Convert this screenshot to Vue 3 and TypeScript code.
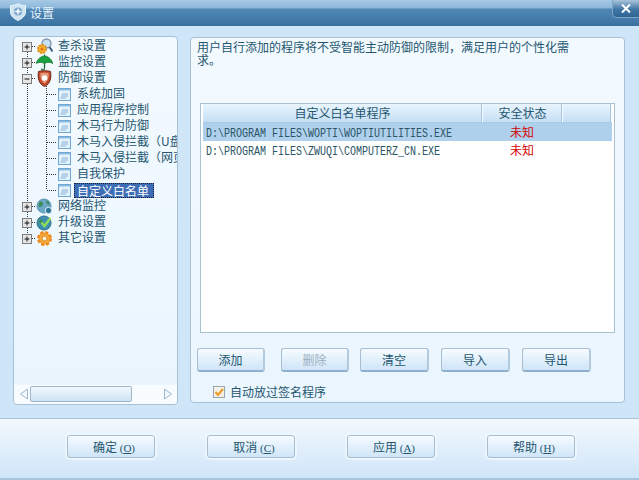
<script setup lang="ts">
type TreeRow = {
  label: string
  icon: string
  child?: boolean
  box?: '+' | '-'
  lastChild?: boolean
  lastRoot?: boolean
  selected?: boolean
}

const treeRows: TreeRow[] = [
  { label: '查杀设置', icon: 'scan', box: '+' },
  { label: '监控设置', icon: 'umbrella', box: '+' },
  { label: '防御设置', icon: 'shield', box: '-' },
  { label: '系统加固', icon: 'doc', child: true },
  { label: '应用程序控制', icon: 'doc', child: true },
  { label: '木马行为防御', icon: 'doc', child: true },
  { label: '木马入侵拦截（U盘传播）', icon: 'doc', child: true },
  { label: '木马入侵拦截（网页传播）', icon: 'doc', child: true },
  { label: '自我保护', icon: 'doc', child: true },
  { label: '自定义白名单', icon: 'doc', child: true, lastChild: true, selected: true },
  { label: '网络监控', icon: 'globe', box: '+' },
  { label: '升级设置', icon: 'update', box: '+' },
  { label: '其它设置', icon: 'gear', box: '+', lastRoot: true },
]

const whitelist = [
  { path: 'D:\\PROGRAM FILES\\WOPTI\\WOPTIUTILITIES.EXE', state: '未知', active: true },
  { path: 'D:\\PROGRAM FILES\\ZWUQI\\COMPUTERZ_CN.EXE', state: '未知', active: false },
]

const actions = [
  { label: '添加', disabled: false },
  { label: '删除', disabled: true },
  { label: '清空', disabled: false },
  { label: '导入', disabled: false },
  { label: '导出', disabled: false },
]

const footerButtons = [
  { label: '确定', key: 'O' },
  { label: '取消', key: 'C' },
  { label: '应用', key: 'A' },
  { label: '帮助', key: 'H' },
]
</script>

<template>
  <div class="window">
    <header class="titlebar">
      <svg class="title-icon" width="16" height="18" viewBox="0 0 16 18">
        <path d="M8 0.5 C10 2 13 2.5 15.5 2.5 V9 C15.5 13 12 15.5 8 17.5 C4 15.5 0.5 13 0.5 9 V2.5 C3 2.5 6 2 8 0.5 Z" fill="#cfe3f3" stroke="#eaf4fb" />
        <circle cx="8" cy="8.5" r="4" fill="#7aa6cb" />
        <path d="M8 4.5 L9 7.5 L12 8.5 L9 9.5 L8 12.5 L7 9.5 L4 8.5 L7 7.5 Z" fill="#f4fafe" />
      </svg>
      <span class="title-text">设置</span>
      <button class="close-btn">
        <svg width="10" height="9" viewBox="0 0 10 9">
          <path d="M1 0.5 L9 8.5 M9 0.5 L1 8.5" stroke="#fff" stroke-width="2" />
        </svg>
      </button>
    </header>

    <main class="content">
      <aside class="tree-panel">
        <div class="tree">
          <div v-for="row in treeRows" :key="row.label" class="tree-row">
            <svg class="guides" :width="row.child ? 43 : 22" height="16">
              <line x1="13.5" :y1="row.label === '查杀设置' ? 8 : 0" x2="13.5" :y2="row.lastRoot ? 8 : 16" class="dots" />
              <template v-if="row.child">
                <line x1="32.5" y1="0" x2="32.5" :y2="row.lastChild ? 8 : 16" class="dots" />
                <line x1="33" y1="8.5" x2="43" y2="8.5" class="dots" />
              </template>
              <template v-else>
                <line x1="18" y1="8.5" x2="22" y2="8.5" class="dots" />
                <rect x="8.5" y="4.5" width="9" height="9" fill="#e6e6e6" stroke="#7d7d7d" />
                <line x1="10.5" y1="9" x2="15.5" y2="9" stroke="#111" />
                <line v-if="row.box === '+'" x1="13" y1="6.5" x2="13" y2="11.5" stroke="#111" />
              </template>
            </svg>

            <svg class="node-icon" :class="{ small: row.child }" :width="row.child ? 15 : 17" :height="row.child ? 15 : 17" :viewBox="row.child ? '0 0 15 15' : '0 0 17 17'">
              <template v-if="row.icon === 'doc'">
                <rect x="1.5" y="1.5" width="12" height="12" fill="#e3f1fb" stroke="#6fa6d2" />
                <rect x="2" y="2" width="11" height="1.5" fill="#8dbde2" />
                <path d="M5 7 H11 M4 9 H11 M3.5 11 H9" stroke="#86b3d8" />
              </template>
              <template v-else-if="row.icon === 'scan'">
                <circle cx="10.5" cy="5.5" r="4.5" fill="#c9e0f2" stroke="#8398b0" stroke-width="1.4" />
                <path d="M13.5 9 L16.5 13.5" stroke="#3d5a80" stroke-width="2" />
                <circle cx="6" cy="11" r="4.2" fill="#f4b12d" stroke="#e08a14" stroke-width="1.6" stroke-dasharray="2.2 1" />
                <circle cx="6" cy="11" r="1.5" fill="#e4721a" />
              </template>
              <template v-else-if="row.icon === 'umbrella'">
                <path d="M0 9.5 C2 4 5.5 2 8.5 2 C11.5 2 15 4 17 9.5 C14 8 11 8 8.5 9.5 C6 8 3 8 0 9.5 Z" fill="#1ba03e" stroke="#0f6f2a" stroke-width="0.6" />
                <path d="M8.5 0.5 V2 M8.5 9 V14.5 C8.5 16.5 5.5 16.5 5.5 14.5" fill="none" stroke="#1f6b3a" stroke-width="1.3" />
              </template>
              <template v-else-if="row.icon === 'shield'">
                <path d="M2.5 1.5 C5 0.5 12 0.5 14.5 1.5 C15.5 7 14.5 14 8.5 16.5 C2.5 14 1.5 7 2.5 1.5 Z" fill="#c24a2b" stroke="#6f2a18" />
                <path d="M4.5 3 C6 2.5 11 2.5 12.5 3 C13 7 12 11 8.5 13.5 C5 11 4 7 4.5 3 Z" fill="#e59a7a" />
                <circle cx="8.5" cy="8" r="2.8" fill="#fff" />
              </template>
              <template v-else-if="row.icon === 'globe'">
                <circle cx="8" cy="8" r="7" fill="#6ba7c7" stroke="#5c95b4" />
                <path d="M4 3.5 C7 3 8 6 6 8 C4 10 2.5 9 2.5 6.5 Z M10 2.5 C13 3 14 6 13 7 C11 6 10 5 10 2.5 Z" fill="#3f8b5b" />
                <circle cx="12.5" cy="12.5" r="3.2" fill="#2c7396" stroke="#e4f1f9" />
              </template>
              <template v-else-if="row.icon === 'update'">
                <circle cx="8" cy="9" r="7" fill="#3f8fb0" stroke="#2b6e8c" />
                <path d="M3 6 C6 4 8 7 6 10 C4 11 3 9 3 6 Z" fill="#3a8e63" />
                <path d="M5.5 8.5 L8.5 12 L14.5 4" fill="none" stroke="#8fdc5c" stroke-width="2.4" />
              </template>
              <template v-else>
                <circle cx="8.5" cy="8.5" r="6" fill="#f19a25" stroke="#ec8a1a" stroke-width="3" stroke-dasharray="3 1.7" />
                <circle cx="8.5" cy="8.5" r="5" fill="#f5a93a" />
                <circle cx="8.5" cy="8.5" r="2.4" fill="#fff2d6" stroke="#c8700f" stroke-width="0.7" />
              </template>
            </svg>

            <span class="node-label" :class="{ selected: row.selected, 'child-label': row.child }">{{ row.label }}</span>
          </div>
        </div>

        <div class="hscroll">
          <svg width="10" height="12" viewBox="0 0 10 12"><path d="M8.5 1 L1.5 6 L8.5 11 Z" fill="#f2f8fd" stroke="#9db6ca" /></svg>
          <div class="hscroll-track"><div class="hscroll-thumb"></div></div>
          <svg width="10" height="12" viewBox="0 0 10 12"><path d="M1.5 1 L8.5 6 L1.5 11 Z" fill="#f2f8fd" stroke="#9db6ca" /></svg>
        </div>
      </aside>

      <section class="detail-panel">
        <p class="hint">用户自行添加的程序将不受智能主动防御的限制，满足用户的个性化需求。</p>

        <div class="table">
          <div class="table-head">
            <div class="head-cell head-path">自定义白名单程序</div>
            <div class="head-cell head-state">安全状态</div>
            <div class="head-cell head-rest"></div>
          </div>
          <div v-for="item in whitelist" :key="item.path" class="table-row" :class="{ active: item.active }">
            <span class="cell-path"><span class="path-text">{{ item.path }}</span></span>
            <span class="cell-state">{{ item.state }}</span>
          </div>
        </div>

        <div class="actions">
          <button v-for="a in actions" :key="a.label" class="btn action-btn" :disabled="a.disabled">{{ a.label }}</button>
        </div>

        <label class="auto-pass">
          <svg width="12" height="12" viewBox="0 0 12 12">
            <rect x="0.5" y="0.5" width="11" height="11" fill="#f5f0e4" stroke="#9aa5ad" />
            <path d="M2.5 6 L5 9 L10 3" fill="none" stroke="#ee9a2a" stroke-width="2" />
          </svg>
          <span>自动放过签名程序</span>
        </label>
      </section>
    </main>

    <footer class="footer">
      <button v-for="b in footerButtons" :key="b.key" class="btn footer-btn">
        {{ b.label }} <span class="hotkey">(<u>{{ b.key }}</u>)</span>
      </button>
    </footer>
  </div>
</template>

<style>
html, body {
  margin: 0;
  background: #4d7ea8;
}
</style>

<style scoped>
.window {
  width: 639px;
  height: 480px;
  box-sizing: border-box;
  display: flex;
  flex-direction: column;
  overflow: hidden;
  background: #cfe5f8;
  border-bottom: 2px solid #a9c3da;
  font-family: "Noto Sans CJK SC", "Liberation Sans", sans-serif;
  font-size: 12px;
  color: #24566f;
}

.titlebar {
  height: 26px;
  flex: none;
  display: flex;
  align-items: center;
  padding: 0 0 2px 10px;
  box-sizing: border-box;
  background: linear-gradient(#a6c9e6 0, #8db6d8 8px, #4f87b5 9px, #3f78a8 22px, #3a6f9c 26px);
}

.title-icon {
  margin-right: 4px;
}

.title-text {
  color: #e9f4fc;
  font-size: 12px;
}

.close-btn {
  margin-left: auto;
  margin-top: -7px;
  width: 27px;
  height: 18px;
  padding: 0;
  display: flex;
  align-items: center;
  justify-content: center;
  border: 1px solid #7ea5c6;
  border-top: none;
  border-right: none;
  border-radius: 0 0 0 5px;
  background: linear-gradient(#a8c4da, #3f76a5 55%, #2e6593);
}

.content {
  flex: 1;
  min-height: 0;
  display: flex;
  gap: 12px;
  padding: 10px 13px 13px;
  border-bottom: 1px solid #aac5dc;
}

.tree-panel {
  width: 165px;
  box-sizing: border-box;
  display: flex;
  flex-direction: column;
  border: 1px solid #a9c1d6;
  border-radius: 4px;
  background: linear-gradient(#f3faff, #e9f5fe);
}

.tree {
  flex: 1;
  min-height: 0;
  overflow: hidden;
  padding-top: 1px;
}

.tree-row {
  height: 16px;
  display: flex;
  align-items: center;
  white-space: nowrap;
}

.guides {
  flex: none;
}

.dots {
  stroke: #3a3a3a;
  stroke-dasharray: 1 1;
}

.node-icon {
  flex: none;
  margin-right: 5px;
}

.node-icon.small {
  margin-right: 4px;
}

.node-label {
  line-height: 14px;
  margin-bottom: 2px;
}

.child-label {
  margin-left: 1px;
}

.node-label.selected {
  background: #3d6db5;
  color: #fff;
  outline: 1px dotted #17223a;
  outline-offset: -1px;
  line-height: 15px;
  padding: 0 5px 0 3px;
  margin-left: -2px;
  margin-bottom: 0;
}

.hscroll {
  height: 18px;
  flex: none;
  display: flex;
  align-items: center;
  padding: 0 4px 1px 5px;
  background: #f8fcff;
  border-radius: 0 0 4px 4px;
}

.hscroll-track {
  flex: 1;
  height: 16px;
  margin: 0 1px;
}

.hscroll-thumb {
  width: 102px;
  height: 100%;
  box-sizing: border-box;
  border: 1px solid #9fb6ca;
  border-radius: 2px;
  background: linear-gradient(#f0f8fe, #cfe3f4);
}

.detail-panel {
  width: 435px;
  box-sizing: border-box;
  display: flex;
  flex-direction: column;
  margin: 1px 0 2px;
  border: 1px solid #a9c1d6;
  border-radius: 4px;
  background: linear-gradient(#f3faff, #eaf5fe);
  padding: 0 9px 0 6px;
}

.hint {
  margin: 2px 0 0;
  width: 376px;
  height: 63px;
  line-height: 13px;
  font-size: 12px;
}

.table {
  margin-left: 3px;
  height: 230px;
  box-sizing: border-box;
  border: 1px solid #a9c1d0;
  background: #fff;
  padding: 0 2px;
}

.table-head {
  height: 19px;
  display: flex;
  box-sizing: border-box;
  background: linear-gradient(#e9f5fe, #c6dff5);
  border-bottom: 1px solid #a8cbe6;
  text-align: center;
  line-height: 18px;
}

.head-cell {
  box-sizing: border-box;
  border-right: 1px solid #f5fbff;
  box-shadow: inset -1px 0 0 #a9c4da;
}

.head-path {
  width: 280px;
}

.head-state {
  width: 80px;
}

.head-rest {
  flex: 1;
}

.table-row {
  height: 18px;
  box-sizing: border-box;
  display: flex;
  align-items: center;
  padding: 0 0 1px 3px;
}

.table-row.active {
  background: #aed0ed;
}

.cell-path {
  width: 304px;
  overflow: visible;
  white-space: nowrap;
}

.path-text {
  display: inline-block;
  font-family: "Liberation Mono", monospace;
  font-size: 12px;
  color: #2c5566;
  transform: scaleX(0.833);
  transform-origin: left center;
}

.cell-state {
  color: #d40000;
}

.actions {
  display: flex;
  gap: 12px;
  margin-top: 15px;
}

.btn {
  box-sizing: border-box;
  padding: 0;
  border: 1px solid #a9bfd1;
  border-radius: 3px;
  background: linear-gradient(#f6fbff, #cfe5f8);
  color: #24566f;
  font: inherit;
}

.action-btn {
  width: 69px;
  height: 24px;
  border-bottom: 2px solid #8fb0cc;
  border-right: 2px solid #b3cbdf;
}

.action-btn:first-child {
  width: 68px;
  margin-right: 4px;
}

.action-btn:nth-child(2) {
  width: 68px;
  margin-right: -1px;
}

.action-btn:disabled {
  color: #9ab0bf;
}

.auto-pass {
  display: flex;
  align-items: center;
  gap: 5px;
  margin: 13px 0 0 16px;
  line-height: 14px;
}

.footer {
  height: 59px;
  flex: none;
  display: flex;
  align-items: center;
  gap: 52px;
  padding: 0 0 5px 67px;
  box-sizing: border-box;
  background: linear-gradient(#f3f9fe, #cfe5f8);
}

.footer-btn {
  width: 88px;
  height: 23px;
  padding-left: 6px;
  box-shadow: 0 0 0 2px #eef6fd;
}

.hotkey {
  font-family: "Liberation Serif", serif;
  font-size: 11px;
}
</style>
